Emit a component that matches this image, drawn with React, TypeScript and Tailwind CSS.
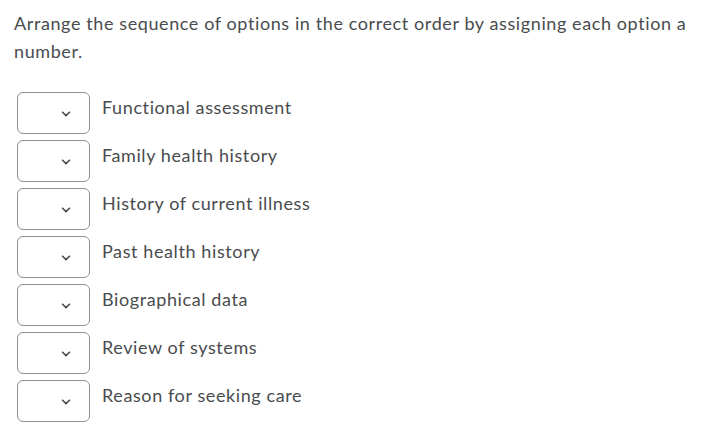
import React from "react";

const items = [
  "Functional assessment",
  "Family health history",
  "History of current illness",
  "Past health history",
  "Biographical data",
  "Review of systems",
  "Reason for seeking care",
];

function Chevron() {
  return (
    <svg width="10" height="6" viewBox="0 0 10 6" fill="none">
      <path d="M1.5 1.2 L5 4.6 L8.5 1.2" stroke="#494c4e" strokeWidth="1.6" strokeLinecap="round" strokeLinejoin="round" />
    </svg>
  );
}

export default function App() {
  return (
    <div className="w-[709px] h-[436px] bg-white text-[#494c4e] font-['Lato',sans-serif] overflow-hidden">
      <p className="pl-[14px] pr-3 pt-[9px] text-[18px] leading-[28px] tracking-[0.6px]">
        Arrange the sequence of options in the correct order by assigning each option a number.
      </p>
      <div className="mt-[27px] pl-[17px] flex flex-col gap-[6px]">
        {items.map((t) => (
          <div key={t} className="flex items-start">
            <div className="w-[73px] h-[42px] border border-[#8c8f91] rounded-[6px] flex items-center justify-end pr-[18px] pt-[2px]">
              <Chevron />
            </div>
            <span className="ml-[12px] mt-[1px] text-[18px] leading-[28px] tracking-[0.6px]">{t}</span>
          </div>
        ))}
      </div>
    </div>
  );
}
